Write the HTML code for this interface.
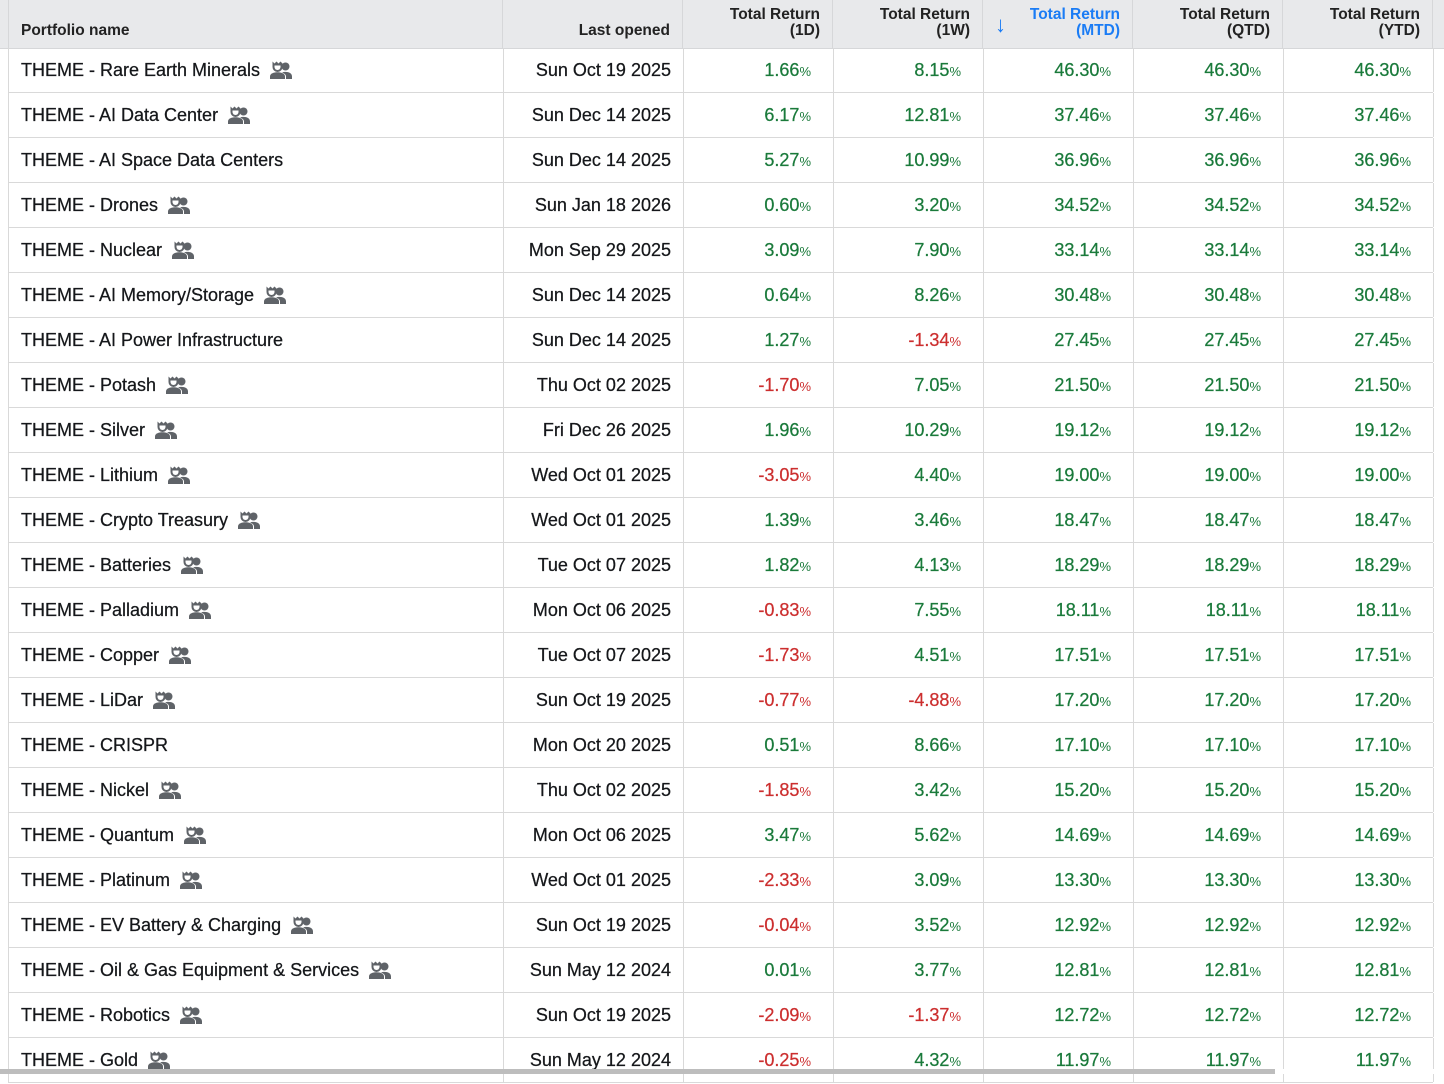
<!DOCTYPE html>
<html><head><meta charset="utf-8"><style>
html,body{margin:0;padding:0;background:#fff;width:1444px;height:1074px;overflow:hidden;font-family:"Liberation Sans",Arial,sans-serif;}
.hdr{position:absolute;left:0;top:0;width:1444px;height:49px;background:#e8e9eb;border-bottom:1px solid #d6d7d9;box-sizing:border-box;}
.hc{position:absolute;top:0;height:48px;box-sizing:border-box;border-right:1px solid #d6d7d9;font-weight:bold;font-size:15.5px;color:#222;text-align:right;padding-right:12px;line-height:16px;padding-top:7px;}
.row{position:absolute;left:8px;width:1425px;height:45px;border-bottom:1px solid #d9d9d9;box-sizing:border-box;}
.c{position:absolute;top:0;height:44px;line-height:44px;border-right:1px solid #d9d9d9;box-sizing:border-box;font-size:18px;color:#15171a;white-space:nowrap;-webkit-text-stroke:0.25px currentColor;}
.n{text-align:right;padding-right:22px;}
.d{text-align:right;padding-right:12px;}
.g{color:#1a7a3b}.r{color:#cc2f2f}
.p{font-size:13px;-webkit-text-stroke:0}
.ic{display:inline-block;vertical-align:-3px;margin-left:10px}
</style></head><body>
<div class="hdr">
<div class="hc" style="left:0;width:503px;text-align:left;padding-left:21px;padding-top:23px;"><span style="position:absolute;left:8px;top:0;height:48px;border-left:1px solid #d6d7d9"></span>Portfolio name</div>
<div class="hc" style="left:503px;width:180px;padding-top:23px">Last opened</div>
<div class="hc" style="left:683px;width:150px">Total Return<br>(1D)</div>
<div class="hc" style="left:833px;width:150px">Total Return<br>(1W)</div>
<div class="hc" style="left:983px;width:150px;color:#1a7cf5"><span style="position:absolute;left:12px;top:17px;font-size:22px;font-weight:normal">↓</span>Total Return<br>(MTD)</div>
<div class="hc" style="left:1133px;width:150px">Total Return<br>(QTD)</div>
<div class="hc" style="left:1283px;width:150px">Total Return<br>(YTD)</div>
</div>
<div id="rows"></div>
<div style="position:absolute;left:0;top:1069px;width:1444px;height:5px;background:#fff"></div>
<div style="position:absolute;left:0;top:1069px;width:1275px;height:5px;background:#bdbdbd"></div>
<script>
var icon='<svg class="ic" width="22" height="18" viewBox="0 0 22 18"><circle cx="15.5" cy="5.5" r="4" fill="#5f6368"/><path d="M12 11.5c1-0.4 2.3-0.6 3.5-0.6 3.5 0 6.5 1.5 6.5 4.5V18h-6v-2.5c0-1.6-1.3-3-4-4z" fill="#5f6368"/><path d="M2.5 0.5L4.5 2.5 6.5 0.5 8.5 2.5 10.5 0.5 12.5 2.5V6a5 5 0 0 1-10 0z" fill="#5f6368"/><path d="M4.5 4.5h6v1.5a3 3 0 0 1-6 0z" fill="#fff"/><path d="M0 18v-2.5C0 12.5 4 11.3 7.5 11.3S15 12.5 15 15.5V18z" fill="#5f6368"/></svg>';
var D=[["Rare Earth Minerals",1,"Sun Oct 19 2025","1.66","8.15","46.30"],
["AI Data Center",1,"Sun Dec 14 2025","6.17","12.81","37.46"],
["AI Space Data Centers",0,"Sun Dec 14 2025","5.27","10.99","36.96"],
["Drones",1,"Sun Jan 18 2026","0.60","3.20","34.52"],
["Nuclear",1,"Mon Sep 29 2025","3.09","7.90","33.14"],
["AI Memory/Storage",1,"Sun Dec 14 2025","0.64","8.26","30.48"],
["AI Power Infrastructure",0,"Sun Dec 14 2025","1.27","-1.34","27.45"],
["Potash",1,"Thu Oct 02 2025","-1.70","7.05","21.50"],
["Silver",1,"Fri Dec 26 2025","1.96","10.29","19.12"],
["Lithium",1,"Wed Oct 01 2025","-3.05","4.40","19.00"],
["Crypto Treasury",1,"Wed Oct 01 2025","1.39","3.46","18.47"],
["Batteries",1,"Tue Oct 07 2025","1.82","4.13","18.29"],
["Palladium",1,"Mon Oct 06 2025","-0.83","7.55","18.11"],
["Copper",1,"Tue Oct 07 2025","-1.73","4.51","17.51"],
["LiDar",1,"Sun Oct 19 2025","-0.77","-4.88","17.20"],
["CRISPR",0,"Mon Oct 20 2025","0.51","8.66","17.10"],
["Nickel",1,"Thu Oct 02 2025","-1.85","3.42","15.20"],
["Quantum",1,"Mon Oct 06 2025","3.47","5.62","14.69"],
["Platinum",1,"Wed Oct 01 2025","-2.33","3.09","13.30"],
["EV Battery &amp; Charging",1,"Sun Oct 19 2025","-0.04","3.52","12.92"],
["Oil &amp; Gas Equipment &amp; Services",1,"Sun May 12 2024","0.01","3.77","12.81"],
["Robotics",1,"Sun Oct 19 2025","-2.09","-1.37","12.72"],
["Gold",1,"Sun May 12 2024","-0.25","4.32","11.97"]];
function num(v,l){var cl=v[0]=='-'?'r':'g';return '<div class="c n '+cl+'" style="left:'+l+'px;width:150px">'+v+'<span class="p">%</span></div>';}
var h='';
D.forEach(function(d,i){
var t=48+i*45;
h+='<div class="row" style="top:'+t+'px;border-left:1px solid #d9d9d9">';
h+='<div class="c" style="left:0;width:495px;padding-left:12px">THEME - '+d[0]+(d[1]?icon:'')+'</div>';
h+='<div class="c d" style="left:495px;width:180px">'+d[2]+'</div>';
h+=num(d[3],675)+num(d[4],825)+num(d[5],975)+num(d[5],1125)+num(d[5],1275);
h+='</div>';});
document.getElementById('rows').innerHTML=h;
</script>
</body></html>
